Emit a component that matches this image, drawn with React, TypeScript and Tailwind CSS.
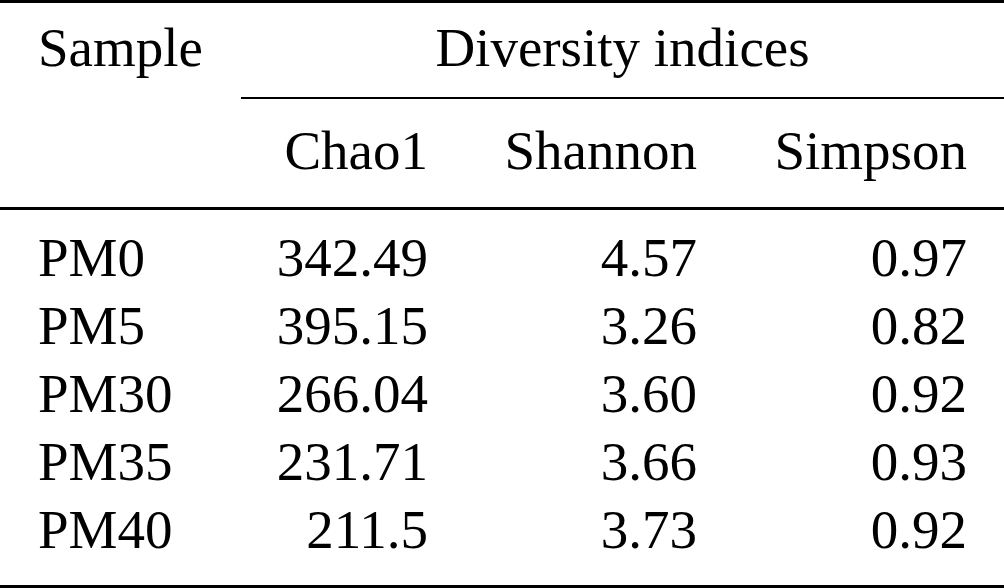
const rows = [
  { name: 'PM0', chao: '342.49', shannon: '4.57', simpson: '0.97' },
  { name: 'PM5', chao: '395.15', shannon: '3.26', simpson: '0.82' },
  { name: 'PM30', chao: '266.04', shannon: '3.60', simpson: '0.92' },
  { name: 'PM35', chao: '231.71', shannon: '3.66', simpson: '0.93' },
  { name: 'PM40', chao: '211.5', shannon: '3.73', simpson: '0.92' },
]

const cols = 'grid grid-cols-[241px_224px_269px_270px]'

export default function App() {
  return (
    <div className="w-[1004px] h-[588px] bg-white text-black overflow-hidden font-['Liberation_Serif','Times_New_Roman',serif] text-[55px] leading-[68px]">
      <div className="h-[3px] bg-black" />

      {/* header */}
      <div className={`${cols} mt-[11px]`}>
        <div className="pl-[38px]">Sample</div>
        <div className="col-span-3 text-center">Diversity indices</div>
      </div>
      <div className="mt-[15px] ml-[241px] h-[2px] bg-black" />
      <div className={`${cols} mt-[18px]`}>
        <div />
        <div className="text-right pr-[37px]">Chao1</div>
        <div className="text-right pr-[37px]">Shannon</div>
        <div className="text-right pr-[37px]">Simpson</div>
      </div>
      <div className="mt-[22px] h-[3px] bg-black" />

      {/* body */}
      <div className="mt-[14px]">
        {rows.map((r) => (
          <div key={r.name} className={cols}>
            <div className="pl-[38px]">{r.name}</div>
            <div className="text-right pr-[37px]">{r.chao}</div>
            <div className="text-right pr-[37px]">{r.shannon}</div>
            <div className="text-right pr-[37px]">{r.simpson}</div>
          </div>
        ))}
      </div>
      <div className="mt-[21px] h-[3px] bg-black" />
    </div>
  )
}
